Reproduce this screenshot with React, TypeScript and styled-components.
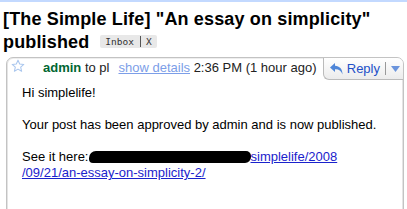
import React from "react";
import styled, { createGlobalStyle } from "styled-components";

const Global = createGlobalStyle`
  html, body {
    margin: 0;
    padding: 0;
    background: #fff;
    font-family: "Liberation Sans", Arial, sans-serif;
    color: #000;
  }
`;

const Page = styled.div`
  width: 407px;
  height: 209px;
  overflow: hidden;
  border-top: 2px solid #c3d9ff;
  box-sizing: border-box;
`;

const Subject = styled.div`
  margin: 6px 0 3px 3px;
  line-height: 22px;
`;

const SubjectText = styled.h1`
  display: inline;
  margin: 0;
  font-size: 18px;
  font-weight: bold;
  letter-spacing: 0.15px;
  color: #000;
`;

const Label = styled.span`
  display: inline-flex;
  align-items: center;
  height: 13px;
  margin-left: 11px;
  padding: 0 5px;
  vertical-align: 3px;
  background: #e8e8e8;
  border-radius: 2px;
  font-family: "DejaVu Sans Mono", monospace;
  font-size: 9.5px;
  line-height: 13px;
  color: #333;
`;

const LabelSep = styled.span`
  display: inline-block;
  width: 1px;
  height: 11px;
  margin: 0 5px 0 6px;
  background: #555;
`;

const Card = styled.div`
  margin: 0 3px 0 6px;
  height: 200px;
  border: 1px solid #c3c3c3;
  border-radius: 7px 7px 0 0;
  box-shadow: inset 1px 0 0 #e4e4e4, inset -1px 0 0 #e4e4e4, inset 0 1px 0 #eee;
`;

const Header = styled.div`
  display: flex;
  align-items: flex-start;
  height: 21px;
  font-size: 13px;
`;

const Star = styled.svg`
  margin: 1px 0 0 4px;
  flex: none;
`;

const Meta = styled.div`
  flex: 1;
  padding-left: 18px;
  line-height: 16px;
  padding-top: 2px;
  white-space: nowrap;
  color: #222;
`;

const Sender = styled.b`
  color: #006633;
`;

const Details = styled.span`
  margin-left: 9px;
  color: #7c9ee8;
  text-decoration: underline;
`;

const ReplyButton = styled.div`
  display: flex;
  align-items: center;
  height: 21px;
  padding: 0 3px 0 5px;
  border-left: 1px solid #bbb;
  border-bottom: 1px solid #bbb;
  border-radius: 0 6px 0 6px;
  background: linear-gradient(#fff, #ececec);
  font-size: 13px;
  color: #2250c8;
`;

const ReplyText = styled.span`
  margin-left: 3px;
`;

const ButtonSep = styled.span`
  width: 1px;
  height: 13px;
  margin: 0 5px 0 5px;
  background: #999;
`;

const Body = styled.div`
  padding: 6px 15px 0 15px;
  font-size: 13px;
  line-height: 16px;
  color: #000;
`;

const Para = styled.p`
  margin: 0 0 16px 0;
`;

const Link = styled.a`
  color: #1a22cc;
  text-decoration: underline;
`;

const Blob = styled.span`
  display: inline-block;
  width: 162px;
  height: 12px;
  vertical-align: -2px;
  background: #000;
  border-radius: 7px 5px 6px 4px;
`;

export default function App() {
  return (
    <Page>
      <Global />
      <Subject>
        <SubjectText>[The Simple Life] "An essay on simplicity" published</SubjectText>
        <Label>
          Inbox<LabelSep />X
        </Label>
      </Subject>
      <Card>
        <Header>
          <Star width="14" height="14" viewBox="0 0 24 24">
            <polygon
              points="12,2 14.9,8.6 22,9.3 16.6,14 18.2,21 12,17.3 5.8,21 7.4,14 2,9.3 9.1,8.6"
              fill="#fff"
              stroke="#a9c6ee"
              strokeWidth="1.8"
              strokeLinejoin="round"
            />
          </Star>
          <Meta>
            <Sender>admin</Sender> to pl<Details>show details</Details> 2:36 PM (1 hour ago)
          </Meta>
          <ReplyButton>
            <svg width="15" height="14" viewBox="0 0 15 14">
              <path
                d="M6 1 L1 5.5 L6 10 L6 7.3 C9.5 7 12 8.5 13.5 12.5 C13.5 7 10.5 4 6 3.8 Z"
                fill="#4f86d8"
              />
            </svg>
            <ReplyText>Reply</ReplyText>
            <ButtonSep />
            <svg width="9" height="6" viewBox="0 0 9 6">
              <path d="M0 0 L9 0 L4.5 6 Z" fill="#6b94dc" />
            </svg>
          </ReplyButton>
        </Header>
        <Body>
          <Para>Hi simplelife!</Para>
          <Para>Your post has been approved by admin and is now published.</Para>
          <Para>
            See it here:
            <Link href="#">
              <Blob />
              simplelife/2008
              <br />
              /09/21/an-essay-on-simplicity-2/
            </Link>
          </Para>
        </Body>
      </Card>
    </Page>
  );
}
